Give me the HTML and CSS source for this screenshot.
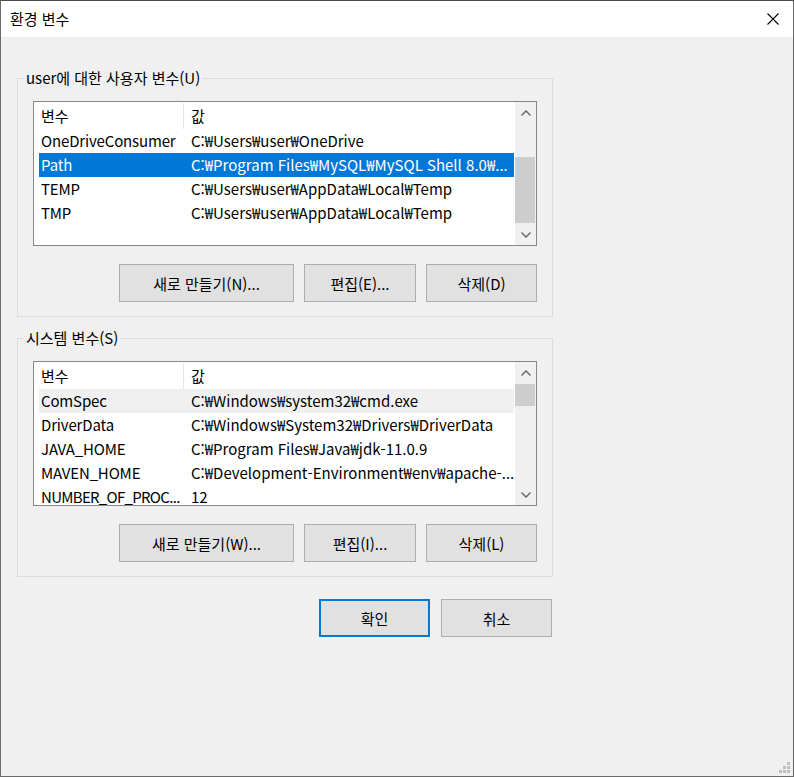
FILE: index.html
```html
<!DOCTYPE html>
<html lang="ko">
<head>
<meta charset="utf-8">
<title>환경 변수</title>
<link rel="stylesheet" href="styles.css">
</head>
<body>
<div class="window">
  <div class="titlebar">
    <span class="title">환경 변수</span>
    <svg class="close" width="12" height="12" viewBox="0 0 12 12"><path d="M0.5 0.5 L11.5 11.5 M11.5 0.5 L0.5 11.5" stroke="#000" stroke-width="1.1" fill="none"/></svg>
  </div>
  <div class="content">
    <fieldset class="group">
      <legend>user에 대한 사용자 변수(U)</legend>
      <div class="list">
        <div class="rows">
          <div class="row head"><span class="c1 sep">변수</span><span class="c2">값</span></div>
          <div class="row"><span class="c1">OneDriveConsumer</span><span class="c2">C:₩Users₩user₩OneDrive</span></div>
          <div class="row selected"><span class="c1">Path</span><span class="c2">C:₩Program Files₩MySQL₩MySQL Shell 8.0₩...</span></div>
          <div class="row"><span class="c1">TEMP</span><span class="c2">C:₩Users₩user₩AppData₩Local₩Temp</span></div>
          <div class="row"><span class="c1">TMP</span><span class="c2">C:₩Users₩user₩AppData₩Local₩Temp</span></div>
        </div>
        <div class="scrollbar">
          <div class="arrow"><svg width="10" height="6" viewBox="0 0 10 6"><path d="M0.5 5.5 L5 1 L9.5 5.5" stroke="#606060" stroke-width="1.3" fill="none"/></svg></div>
          <div class="track"><div class="thumb thumb-user"></div></div>
          <div class="arrow"><svg width="10" height="6" viewBox="0 0 10 6"><path d="M0.5 0.5 L5 5 L9.5 0.5" stroke="#606060" stroke-width="1.3" fill="none"/></svg></div>
        </div>
      </div>
      <div class="buttons">
        <button class="btn wide">새로 만들기(N)...</button>
        <button class="btn">편집(E)...</button>
        <button class="btn narrow">삭제(D)</button>
      </div>
    </fieldset>

    <fieldset class="group second">
      <legend>시스템 변수(S)</legend>
      <div class="list">
        <div class="rows">
          <div class="row head"><span class="c1 sep">변수</span><span class="c2">값</span></div>
          <div class="row hover"><span class="c1">ComSpec</span><span class="c2">C:₩Windows₩system32₩cmd.exe</span></div>
          <div class="row"><span class="c1">DriverData</span><span class="c2">C:₩Windows₩System32₩Drivers₩DriverData</span></div>
          <div class="row"><span class="c1">JAVA_HOME</span><span class="c2">C:₩Program Files₩Java₩jdk-11.0.9</span></div>
          <div class="row"><span class="c1">MAVEN_HOME</span><span class="c2">C:₩Development-Environment₩env₩apache-...</span></div>
          <div class="row"><span class="c1 tight">NUMBER_OF_PROC...</span><span class="c2">12</span></div>
        </div>
        <div class="scrollbar">
          <div class="arrow"><svg width="10" height="6" viewBox="0 0 10 6"><path d="M0.5 5.5 L5 1 L9.5 5.5" stroke="#606060" stroke-width="1.3" fill="none"/></svg></div>
          <div class="track"><div class="thumb thumb-system"></div></div>
          <div class="arrow"><svg width="10" height="6" viewBox="0 0 10 6"><path d="M0.5 0.5 L5 5 L9.5 0.5" stroke="#606060" stroke-width="1.3" fill="none"/></svg></div>
        </div>
      </div>
      <div class="buttons">
        <button class="btn wide">새로 만들기(W)...</button>
        <button class="btn">편집(I)...</button>
        <button class="btn narrow">삭제(L)</button>
      </div>
    </fieldset>

    <div class="footer">
      <button class="btn action primary">확인</button>
      <button class="btn action">취소</button>
    </div>
  </div>
  <div class="grip">
    <i class="d d1"></i><i class="d d2"></i><i class="d d3"></i><i class="d d4"></i><i class="d d5"></i><i class="d d6"></i>
  </div>
</div>
</body>
</html>
```

FILE: styles.css
```css
* { box-sizing: border-box; }
html, body { margin: 0; padding: 0; }
body {
  font-family: "Noto Sans CJK KR", "Noto Sans", sans-serif;
  font-size: 15px;
  color: #000;
  background: #f0f0f0;
}
.window {
  position: relative;
  width: 794px;
  height: 777px;
  border: 1px solid #6b6b6b;
  border-top-color: #4a4a4a;
  background: #f0f0f0;
  display: flex;
  flex-direction: column;
}
.titlebar {
  height: 36px;
  background: #fff;
  display: flex;
  align-items: center;
  justify-content: space-between;
  padding: 0 14px 0 9px;
  flex-shrink: 0;
}
.title { font-size: 15px; line-height: 20px; }
.close { display: block; }

.content {
  padding: 31px 0 0 16px;
}
.group {
  width: 536px;
  margin: 0;
  border: 1px solid #dcdcdc;
  padding: 13px 15px 14px 15px;
}
.group.second { margin-top: 11px; }
.group legend {
  padding: 0 2px;
  margin-left: -9px;
  line-height: 20px;
  font-size: 15px;
}
.list {
  height: 145px;
  border: 1px solid #828790;
  background: #fff;
  display: flex;
  overflow: hidden;
}
.rows {
  width: 480px;
  padding-left: 5px;
  overflow: hidden;
}
.row {
  height: 24px;
  display: flex;
  align-items: center;
  white-space: nowrap;
  line-height: 20px;
}
.row.head { height: 27px; }
.c1 {
  width: 145px;
  padding-left: 2px;
  flex-shrink: 0;
  align-self: stretch;
  display: flex;
  align-items: center;
  overflow: hidden;
  letter-spacing: -0.15px;
}
.c1.tight { letter-spacing: -0.7px; }
.c2 {
  padding-left: 7px;
  flex: 1;
  overflow: hidden;
}
.row.head .c1.sep { border-right: 1px solid #e5e5e5; margin: 1px 0 0; }
.row.selected { background: #0078d7; color: #fff; }
.row.hover { background: #f0f0f0; }

.scrollbar {
  width: 21px;
  margin-left: 1px;
  background: #f0f0f0;
  display: flex;
  flex-direction: column;
}
.arrow {
  height: 21px;
  display: flex;
  align-items: center;
  justify-content: center;
}
.arrow svg { display: block; }
.track { flex: 1; }
.thumb { background: #cdcdcd; margin: 0 1px 0 0; }
.thumb-user { margin-top: 34px; height: 66px; }
.thumb-system { margin-top: 1px; height: 22px; }

.buttons {
  display: flex;
  justify-content: flex-end;
  gap: 10px;
  margin-top: 18px;
}
.btn {
  height: 38px;
  width: 112px;
  border: 1px solid #adadad;
  background: #e1e1e1;
  font-family: "Noto Sans CJK KR", "Noto Sans", sans-serif;
  font-size: 15px;
  color: #000;
  padding: 0;
  margin: 0;
}
.btn.wide { width: 175px; }
.btn.narrow { width: 111px; }

.footer {
  width: 535px;
  display: flex;
  justify-content: flex-end;
  gap: 11px;
  margin-top: 22px;
}
.btn.action { width: 111px; }
.btn.primary { border: 2px solid #0078d7; }

.grip {
  position: absolute;
  right: 3px;
  bottom: 3px;
  width: 11px;
  height: 11px;
}
.d {
  position: absolute;
  width: 3px;
  height: 3px;
  background: #bfbfbf;
}
.d1 { left: 8px; top: 0; }
.d2 { left: 4px; top: 4px; }
.d3 { left: 8px; top: 4px; }
.d4 { left: 0; top: 8px; }
.d5 { left: 4px; top: 8px; }
.d6 { left: 8px; top: 8px; }
```
